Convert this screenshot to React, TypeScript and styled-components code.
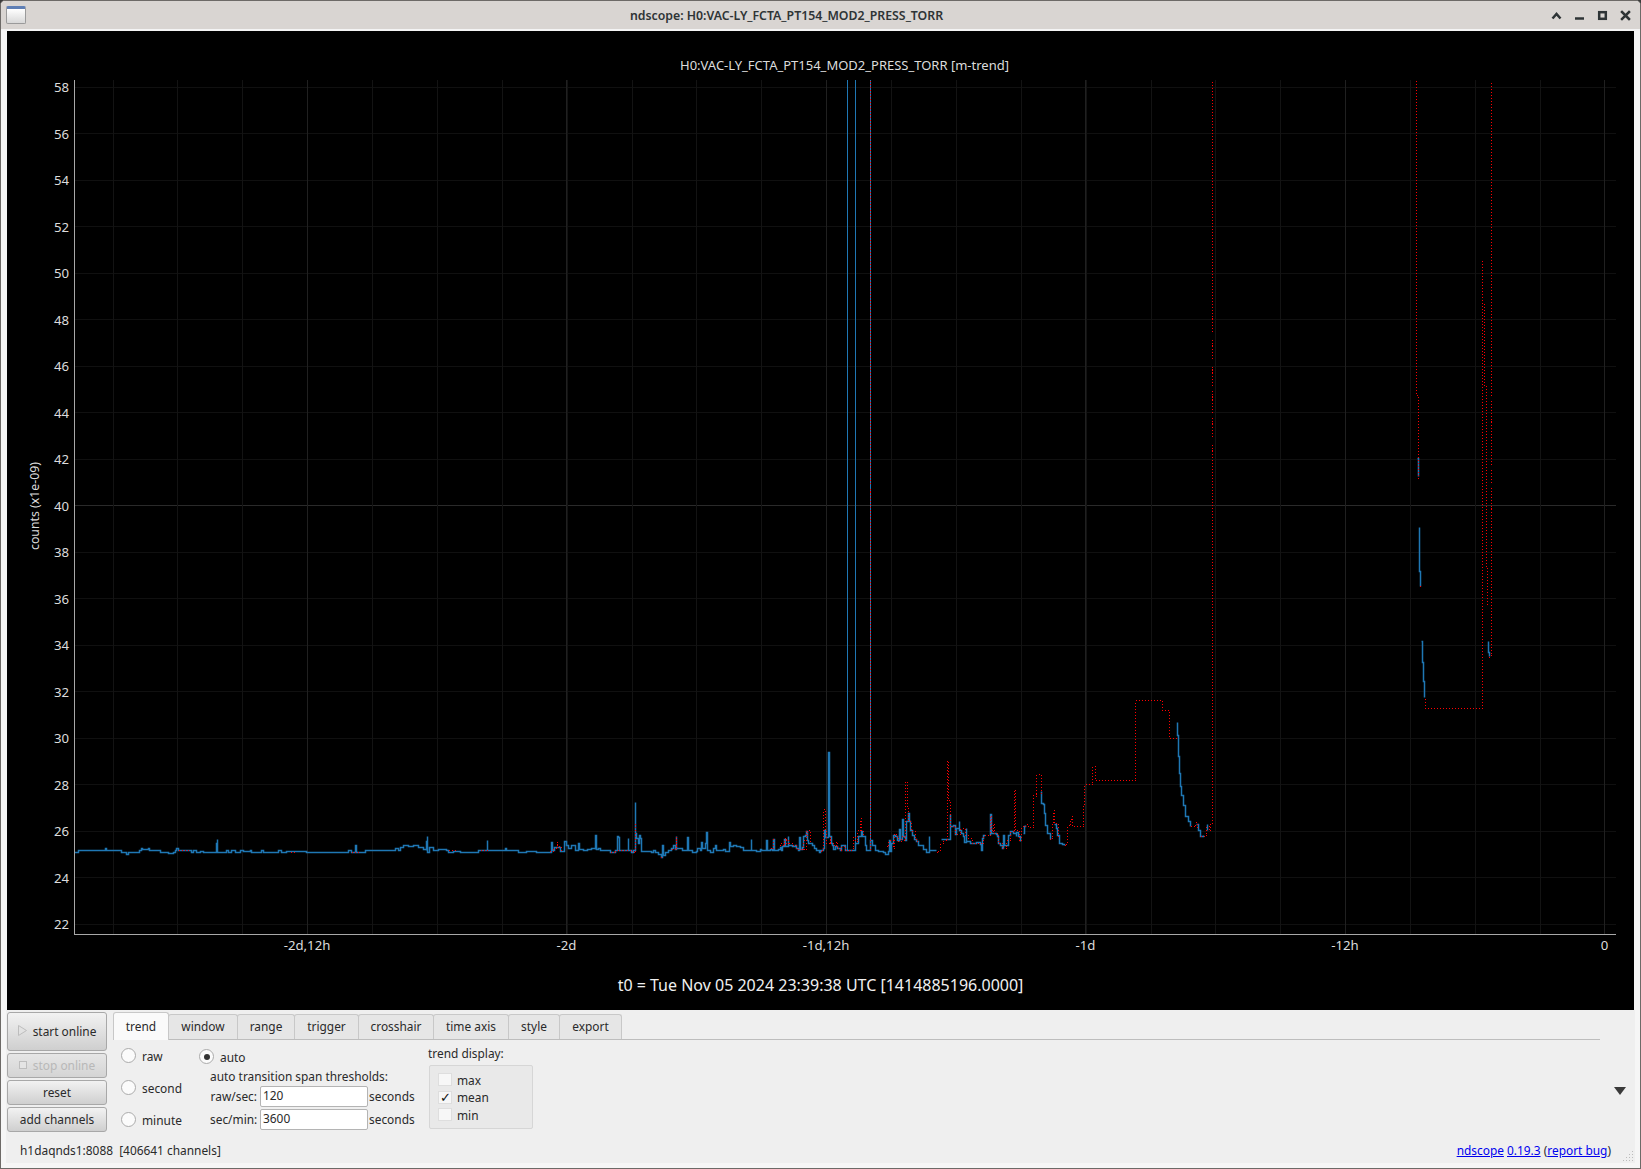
import React from 'react';
import styled, { createGlobalStyle } from 'styled-components';

const GlobalStyle = createGlobalStyle`
  html, body {
    margin: 0;
    padding: 0;
    background: #3a3a3a;
  }
`;

const Window = styled.div`
  width: 1641px;
  height: 1169px;
  box-sizing: border-box;
  display: flex;
  flex-direction: column;
  overflow: hidden;
  background: #f6f6f6;
  border: 1px solid #6d6a67;
  border-radius: 5px 5px 0 0;
  font-family: 'Noto Sans', 'Open Sans', sans-serif;
  font-size: 11.9px;
  color: #2a2a2a;
`;

const TitleBar = styled.div`
  position: relative;
  flex: 0 0 30px;
  box-sizing: border-box;
  display: flex;
  align-items: center;
  justify-content: space-between;
  padding: 0 6px 0 5px;
  background: #d9d5d2;
  border-bottom: 2px solid #f4f4f4;
`;

const TitleText = styled.div`
  position: absolute;
  left: 0;
  right: 68px;
  top: 6px;
  text-align: center;
  font-weight: 600;
  font-size: 12.3px;
  color: #2e3436;
`;

const WindowIcon = styled.div`
  width: 20px;
  height: 18px;
  box-sizing: border-box;
  border: 1px solid #9a9a9a;
  border-top: 3px solid #5f7fb5;
  border-radius: 2px;
  background: linear-gradient(#ffffff, #d8d8d8);
`;

const WindowButtons = styled.div`
  display: flex;
  align-items: center;
  gap: 6px;
  z-index: 1;
`;

const WindowButton = styled.svg`
  width: 17px;
  height: 17px;
  stroke: #2e3436;
  stroke-width: 2.5;
  fill: none;
`;

const PlotArea = styled.div`
  flex: 0 0 979px;
  margin: 0 6px;
  background: #000;
  line-height: 0;
`;

const Controls = styled.div`
  flex: 1;
  display: flex;
  gap: 6px;
  margin: 0 5px 5px;
  padding: 2px 0 0 1px;
  position: relative;
  background: #efefef;
`;

const ButtonColumn = styled.div`
  flex: 0 0 100px;
  display: flex;
  flex-direction: column;
  gap: 2px;
`;

const PushButton = styled.button<{ $h: number; $disabled?: boolean }>`
  height: ${({ $h }) => $h}px;
  width: 100%;
  padding: 0 0 2px;
  display: flex;
  align-items: center;
  justify-content: center;
  gap: 6px;
  border: 1px solid #a8a8a8;
  border-radius: 3px;
  background: ${({ $disabled }) =>
    $disabled ? 'linear-gradient(#e6e6e6, #d4d4d4)' : 'linear-gradient(#f2f2f2, #cfcfcf)'};
  font: inherit;
  color: ${({ $disabled }) => ($disabled ? '#b8b8b8' : '#2a2a2a')};
`;

const Main = styled.div`
  flex: 1;
  display: flex;
  flex-direction: column;
  min-width: 0;
  padding-right: 35px;
`;

const TabBar = styled.div`
  display: flex;
  height: 28px;
  box-sizing: border-box;
  padding-top: 2px;
  border-bottom: 1px solid #bdbdbd;
`;

const Tab = styled.div<{ $active?: boolean; $w: number }>`
  width: ${({ $w }) => $w}px;
  box-sizing: border-box;
  height: ${({ $active }) => ($active ? '28px' : '25px')};
  margin-top: ${({ $active }) => ($active ? '-2px' : '0')};
  display: flex;
  align-items: center;
  justify-content: center;
  background: ${({ $active }) => ($active ? '#fafafa' : '#e6e6e6')};
  border: 1px solid #c8c8c8;
  border-bottom: none;
  margin-right: -1px;
  border-radius: 3px 3px 0 0;
  position: relative;
  z-index: ${({ $active }) => ($active ? 1 : 0)};
  padding-bottom: 2px;
`;

const TabPage = styled.div`
  display: flex;
  height: 100px;
  padding-left: 8px;
`;

const RadioColumn = styled.div`
  width: 78px;
  display: flex;
  flex-direction: column;
  gap: 15px;
  padding-top: 7px;
`;

const RadioRow = styled.label`
  display: flex;
  align-items: center;
  gap: 6px;
  height: 17px;
`;

const RadioDot = styled.span<{ $on?: boolean }>`
  width: 13px;
  height: 13px;
  border-radius: 50%;
  background: #fbfbfb;
  border: 1px solid #ababab;
  display: flex;
  align-items: center;
  justify-content: center;
  &::after {
    content: '';
    width: 6px;
    height: 6px;
    border-radius: 50%;
    background: ${({ $on }) => ($on ? '#333' : 'transparent')};
  }
`;

const AutoColumn = styled.div`
  width: 229px;
  display: flex;
  flex-direction: column;
  padding-top: 8px;
`;

const AutoLabel = styled.div`
  margin: 3px 0 0 11px;
  height: 17px;
  line-height: 17px;
  white-space: nowrap;
`;

const SpanRow = styled.div`
  display: flex;
  align-items: center;
  height: 23px;
  padding-left: 11px;
  margin-top: -1px;
  margin-bottom: 1px;
`;

const SpanLabel = styled.span`
  width: 50px;
  text-align: right;
  padding-right: 3px;
  box-sizing: border-box;
  white-space: nowrap;
`;

const SpanInput = styled.div`
  width: 108px;
  height: 21px;
  margin-right: 1px;
  margin-top: 1px;
  box-sizing: border-box;
  line-height: 17px;
  padding-left: 2px;
  background: #fff;
  border: 1px solid #b4b4b4;
  border-radius: 2px;
`;

const DisplayColumn = styled.div`
  display: flex;
  flex-direction: column;
  padding-top: 5px;
`;

const DisplayBox = styled.div`
  margin: 4px 0 0 1px;
  width: 104px;
  height: 64px;
  box-sizing: border-box;
  padding: 5px 0 0 8px;
  background: #e9e9e9;
  border: 1px solid #d6d6d6;
  border-radius: 2px;
  display: flex;
  flex-direction: column;
  gap: 0.5px;
`;

const CheckRow = styled.div`
  display: flex;
  align-items: center;
  gap: 5px;
  height: 17px;
`;

const CheckBox = styled.span`
  width: 12px;
  height: 11px;
  background: #f7f7f7;
  border: 1px solid #dedede;
  display: flex;
  align-items: center;
  justify-content: center;
  font-size: 13px;
  line-height: 11px;
  color: #111;
`;

const StatusRow = styled.div`
  display: flex;
  justify-content: space-between;
  margin-left: -106px;
  margin-right: -11px;
  padding: 0 0 0 13px;
  height: 20px;
  line-height: 20px;
`;

const ChannelInfo = styled.span`
  white-space: pre;
`;

const LinkText = styled.a`
  color: #0000ee;
  text-decoration: underline;
`;

const CollapseArrow = styled.svg`
  position: absolute;
  right: 9px;
  top: 77px;
  width: 12px;
  height: 8px;
  fill: #3a3a3a;
`;

const ResizeGrip = styled.svg`
  position: absolute;
  right: 1px;
  bottom: 1px;
  width: 11px;
  height: 11px;
  fill: #bcbcbc;
`;

// traced from the plot, in 3x crop coordinates, then mapped back to page pixels
type Pts = number[][];
const crop = (ox: number, oy: number, pts: Pts): Pts =>
  pts.map(([x, y]) => [ox + x / 3, oy + y / 3]);

const snap = (v: number) => Math.floor(v) + 0.5;

const stepPath = (pts: Pts) =>
  pts.map(([x, y], i) => (i === 0 ? `M${snap(x)} ${snap(y)}` : `H${snap(x)}V${snap(y)}`)).join('');

const flat = crop(60, 800, [
  [44, 157], [52, 157], [55, 151], [130, 151], [135, 146], [140, 151], [180, 151], [183, 157], [195, 157],
  [200, 162], [205, 157], [232, 157], [238, 151], [243, 146], [248, 149], [262, 149], [265, 146], [268, 151],
  [295, 151], [300, 157], [315, 158], [325, 160], [340, 157], [345, 151], [350, 146], [356, 151], [390, 151],
  [395, 157], [400, 151], [408, 157], [420, 155], [430, 157], [468, 157], [468, 130], [470, 130], [472, 118],
  [473, 157], [495, 157], [500, 151], [505, 157], [515, 151], [525, 157], [540, 151], [550, 155], [570, 151],
  [575, 157], [590, 157], [605, 151], [610, 157], [650, 157], [655, 151], [665, 157], [680, 155], [740, 157],
  [805, 157], [815, 158], [825, 157], [850, 157], [865, 151], [875, 157], [885, 157], [885, 135], [888, 135],
  [890, 157], [905, 157], [915, 151], [1000, 151], [1005, 145], [1015, 151], [1020, 142], [1030, 136],
  [1045, 138], [1060, 136], [1075, 143], [1090, 148], [1098, 151], [1099, 125], [1102, 108], [1103, 157],
  [1108, 143], [1120, 151], [1135, 148], [1160, 151], [1165, 157], [1180, 153], [1200, 157], [1250, 157],
  [1255, 151], [1281, 151], [1282, 120], [1283, 151], [1330, 151], [1335, 145], [1340, 151], [1370, 151],
  [1375, 157], [1400, 155], [1430, 157], [1470, 157], [1474, 127], [1476, 150], [1484, 143], [1500, 148],
]);

const ripple = crop(500, 780, [
  [180, 215], [192, 215], [192, 183], [197, 183], [200, 197], [205, 205], [215, 197], [225, 210], [235, 190],
  [237, 207], [250, 212], [262, 208], [275, 205], [285, 208], [286, 165], [288, 208], [295, 205], [300, 212],
  [325, 212], [330, 217], [345, 212], [351, 212], [352, 170], [356, 172], [357, 212], [384, 212], [385, 175],
  [386, 212], [395, 217], [400, 210], [406, 205], [406, 66], [407, 160], [410, 175], [415, 190], [418, 165],
  [421, 175], [423, 215], [455, 217], [460, 212], [465, 217], [475, 222], [484, 232], [487, 195], [490, 225],
  [497, 218], [505, 212], [515, 205], [520, 195], [525, 208], [529, 170], [530, 205], [540, 205], [548, 212],
  [562, 212], [562, 172], [564, 212], [578, 217], [590, 215], [592, 205], [600, 210], [605, 187], [607, 205],
  [617, 190], [619, 157], [621, 210], [630, 217], [640, 205], [645, 197], [650, 210], [665, 212], [670, 208],
  [675, 215], [688, 210], [688, 187], [692, 200], [700, 197], [710, 200], [720, 202], [730, 212], [752, 212],
  [754, 177], [755, 212], [770, 215], [782, 207], [785, 212], [799, 205], [799, 180], [801, 212], [810, 208],
  [818, 212], [820, 178], [823, 210], [835, 208],
]);

const bursts = crop(780, 680, [
  [0, 503], [3, 510], [8, 510], [8, 500], [13, 500], [13, 478], [15, 498], [24, 496], [25, 468], [26, 495],
  [36, 498], [46, 497], [48, 505], [55, 510], [58, 510], [59, 472], [60, 508], [68, 503], [70, 470], [72, 468],
  [75, 465], [80, 455], [82, 480], [85, 490], [92, 490], [97, 497], [102, 505], [108, 512], [118, 518], [122, 512],
  [130, 505], [134, 450], [137, 472], [144, 472], [145, 217], [147, 258], [149, 470], [153, 490], [158, 497],
  [160, 507], [165, 500], [172, 505], [180, 510], [185, 497], [192, 497], [197, 510], [226, 510], [226, 490],
  [235, 470], [243, 455], [248, 470], [255, 495], [260, 512], [270, 512], [272, 480], [278, 495], [285, 510],
  [295, 515], [310, 518], [315, 523], [325, 515], [328, 482], [330, 515], [335, 490], [340, 465], [345, 470],
  [352, 480], [358, 483], [358, 448], [361, 478], [367, 470], [367, 418], [370, 470], [375, 480], [378, 425],
  [385, 400], [387, 425], [392, 452], [397, 465], [402, 478], [410, 485], [415, 495], [425, 497], [430, 507],
  [440, 517], [447, 511], [448, 468], [449, 511], [468, 511],
]);

const blueSegments: Pts[] = [
  [...flat, ...ripple, ...bursts],
  crop(780, 680, [
    [485, 478], [495, 478], [511, 478], [511, 403], [512, 440], [520, 437], [525, 445], [527, 462], [530, 445],
    [537, 425], [539, 450], [545, 460], [550, 470], [553, 487], [557, 487], [559, 445], [560, 485], [572, 490],
    [585, 490], [590, 487], [600, 492], [605, 512], [607, 475], [610, 467], [615, 467],
  ]),
  crop(780, 680, [
    [630, 465], [631, 403], [633, 460], [648, 463], [652, 470], [656, 490], [662, 497], [668, 505], [670, 465],
    [672, 495], [680, 495], [684, 465], [690, 455], [700, 460], [708, 468], [710, 458], [714, 470], [720, 485],
  ]),
  crop(780, 680, [[730, 460], [732, 440], [736, 437]]),
  crop(780, 680, [
    [784, 335], [785, 370], [790, 372], [792, 400], [797, 435], [803, 460], [810, 477],
  ]),
  crop(780, 680, [[823, 433], [828, 445], [833, 465], [838, 490], [848, 492], [852, 497]]),
  crop(780, 680, [
    [1192, 127], [1192, 165], [1196, 165], [1196, 230], [1199, 280], [1202, 318], [1205, 345], [1210, 375],
    [1217, 408], [1224, 425], [1230, 440],
  ]),
  crop(780, 680, [[1250, 432], [1256, 452], [1262, 470], [1270, 465]]),
  crop(780, 680, [[1282, 433], [1282, 452]]),
  // right-hand fragments
  crop(1380, 380, [[112, 235], [115, 238], [115, 290]]),
  crop(1380, 380, [[118, 441], [118, 573], [121, 573], [121, 618]]),
  crop(1380, 380, [[124, 784], [127, 786], [127, 848], [130, 850], [130, 905], [133, 905], [133, 952]]),
  crop(1380, 380, [[325, 783], [325, 818], [328, 820], [328, 828]]),
];

// the three full-height spikes, a single pixel wide
const spikeX = [847, 855, 870];

const redSegments: Pts[] = [
  crop(780, 680, [
    [0, 490], [12, 490], [14, 475], [18, 490], [40, 497], [50, 507], [68, 507], [70, 480], [80, 450], [83, 470],
  ]),
  crop(780, 680, [
    [120, 515], [128, 505], [131, 505], [131, 388], [135, 388], [135, 450], [140, 490], [150, 470], [152, 490],
    [160, 497], [168, 485], [172, 505], [180, 510], [183, 500], [190, 500], [197, 510], [215, 505], [220, 470],
    [225, 485], [232, 450], [240, 415], [243, 450], [250, 470],
  ]),
  crop(780, 680, [
    [320, 500], [325, 480], [340, 505], [342, 460], [350, 470], [355, 485], [365, 470], [373, 480], [377, 305],
    [381, 305], [381, 380], [385, 425], [395, 455], [405, 478], [412, 490],
  ]),
  crop(780, 680, [
    [470, 517], [475, 510], [480, 490], [490, 480], [503, 470], [503, 240], [506, 240], [506, 360], [511, 370],
    [511, 440], [520, 440], [527, 462], [540, 445], [556, 465], [565, 475], [578, 490], [605, 490], [610, 467],
    [630, 465], [632, 405], [635, 450], [643, 430], [640, 460], [655, 490], [668, 505], [680, 480], [690, 455],
    [704, 455], [704, 328], [706, 328], [706, 450], [718, 480], [725, 440], [737, 432], [745, 443], [760, 443],
    [760, 343], [768, 350], [770, 282], [783, 282], [785, 345],
  ]),
  crop(780, 680, [
    [808, 477], [815, 475], [818, 430], [820, 390], [822, 430], [835, 470],
  ]),
  crop(780, 680, [
    [852, 495], [860, 490], [862, 435], [870, 420], [875, 410], [878, 440], [907, 440], [909, 375], [912, 314],
    [935, 314], [936, 260], [941, 260], [945, 300], [1065, 300], [1067, 60], [1146, 60], [1148, 90], [1167, 92],
    [1169, 175], [1192, 175],
  ]),
  crop(780, 680, [
    [1230, 440], [1240, 440], [1247, 428], [1252, 445],
  ]),
  crop(780, 680, [
    [1262, 470], [1275, 465], [1280, 440], [1287, 450], [1292, 430], [1295, 430],
  ]),
  [[1212, 823], [1212, 80]],
  [[870, 80], [870, 850]],
  // flat-section leftovers
  crop(60, 800, [[355, 151], [390, 151]]),
  crop(60, 800, [[690, 158], [702, 158]]),
  crop(60, 800, [[875, 158], [895, 158]]),
  crop(60, 800, [[1165, 152], [1185, 152]]),
  crop(60, 800, [[1260, 151], [1285, 151]]),
  crop(500, 780, [[148, 215], [160, 205], [172, 183], [172, 200], [185, 217]]),
  crop(500, 780, [[330, 217], [345, 210], [380, 212], [396, 217], [406, 200], [406, 130]]),
  crop(500, 780, [[480, 232], [484, 226]]),
  crop(500, 780, [[515, 208], [529, 168], [530, 205]]),
  crop(500, 780, [[810, 205], [820, 175]]),
  crop(500, 780, [[838, 195], [853, 178], [865, 195]]),
  crop(500, 780, [[900, 208], [920, 150], [930, 185]]),
  // right-hand verticals
  [[1416, 80], [1416, 395], [1418, 395], [1418, 478]],
  [[1420, 585], [1420, 587]],
  crop(1380, 380, [[136, 955], [136, 985], [307, 985]]),
  [[1482, 708], [1482, 258]],
  [[1484, 303], [1484, 385], [1486, 388], [1486, 568], [1487, 570], [1487, 605]],
  [[1491, 82], [1491, 655], [1489, 657]],
];

const yTick = (v: number) => 87.5 + (58 - v) * 23.24;
const yTicks = Array.from({ length: 19 }, (_, i) => 58 - i * 2);
const minorX = Array.from({ length: 23 }, (_, i) => 113 + i * 64.88);
const majorX = [
  { x: 307, label: '-2d,12h' },
  { x: 566.5, label: '-2d' },
  { x: 826, label: '-1d,12h' },
  { x: 1085.5, label: '-1d' },
  { x: 1345, label: '-12h' },
  { x: 1604.5, label: '0' },
];

const ScopePlot = () => (
  <svg width={1627} height={979} viewBox="7 31 1627 979" fontFamily="'Noto Sans', sans-serif">
    <g shapeRendering="crispEdges">
      {yTicks.map((v) => (
        <line
          key={v}
          x1={75}
          x2={1616}
          y1={snap(yTick(v))}
          y2={snap(yTick(v))}
          stroke={v === 40 ? '#2a2a2a' : '#101010'}
        />
      ))}
      {minorX.map((x) => (
        <line key={x} x1={snap(x)} x2={snap(x)} y1={80} y2={934} stroke="#131313" />
      ))}
      {majorX.map(({ x }) => (
        <line key={x} x1={snap(x)} x2={snap(x)} y1={80} y2={934} stroke="#202020" />
      ))}
      {spikeX.map((x) => (
        <line key={x} x1={x + 0.5} x2={x + 0.5} y1={80} y2={850} stroke="#1f77b4" />
      ))}
    </g>
    {blueSegments.map((pts, i) => (
      <path key={i} d={stepPath(pts)} fill="none" stroke="#1f77b4" strokeWidth={1.5} />
    ))}
    <g shapeRendering="crispEdges">
      {redSegments.map((pts, i) => (
        <path key={i} d={stepPath(pts)} fill="none" stroke="#ff0000" strokeWidth={1} strokeDasharray="1 2" />
      ))}
      <line x1={74.5} x2={74.5} y1={80} y2={934} stroke="#a8a8a8" />
      <line x1={74} x2={1616} y1={934.5} y2={934.5} stroke="#a8a8a8" />
    </g>
    <g fill="#dcdcdc" fontSize={13.2}>
      {yTicks.map((v) => (
        <text key={v} x={69} y={yTick(v) + (v === 58 ? 4 : 5)} textAnchor="end">
          {v}
        </text>
      ))}
      {majorX.map(({ x, label }) => (
        <text key={label} x={x} y={950} textAnchor="middle">
          {label}
        </text>
      ))}
      <text x={844.5} y={70} textAnchor="middle" fontSize={13}>
        H0:VAC-LY_FCTA_PT154_MOD2_PRESS_TORR [m-trend]
      </text>
      <text x={39} y={506} textAnchor="middle" fontSize={12.3} transform="rotate(-90 39 506)">
        counts (x1e-09)
      </text>
      <text x={820.5} y={991} textAnchor="middle" fontSize={16} fill="#f0f0f0">
        t0 = Tue Nov 05 2024 23:39:38 UTC [1414885196.0000]
      </text>
    </g>
  </svg>
);

const tabs = [
  { label: 'trend', w: 56 },
  { label: 'window', w: 70 },
  { label: 'range', w: 58 },
  { label: 'trigger', w: 65 },
  { label: 'crosshair', w: 76 },
  { label: 'time axis', w: 76 },
  { label: 'style', w: 52 },
  { label: 'export', w: 63 },
];

const App = () => (
  <>
    <GlobalStyle />
    <Window>
      <TitleBar>
        <WindowIcon />
        <TitleText>ndscope: H0:VAC-LY_FCTA_PT154_MOD2_PRESS_TORR</TitleText>
        <WindowButtons>
          <WindowButton viewBox="0 0 17 17">
            <path d="M4.5 11.5 L8.5 7 L12.5 11.5" />
          </WindowButton>
          <WindowButton viewBox="0 0 17 17">
            <path d="M4 11.5 H13" />
          </WindowButton>
          <WindowButton viewBox="0 0 17 17">
            <rect x="5.2" y="5.2" width="6.6" height="6.6" />
          </WindowButton>
          <WindowButton viewBox="0 0 17 17">
            <path d="M5 5 L12 12 M12 5 L5 12" strokeLinecap="square" />
          </WindowButton>
        </WindowButtons>
      </TitleBar>
      <PlotArea>
        <ScopePlot />
      </PlotArea>
      <Controls>
        <ButtonColumn>
          <PushButton $h={39}>
            <svg width="9" height="11" viewBox="0 0 9 11" fill="#e2e2e2" stroke="#bdbdbd">
              <path d="M0.5 0.5 L8.5 5.5 L0.5 10.5 Z" />
            </svg>
            start online
          </PushButton>
          <PushButton $h={25} $disabled>
            <svg width="8" height="8" viewBox="0 0 8 8" fill="#e4e4e4" stroke="#bdbdbd">
              <rect x="0.5" y="0.5" width="7" height="7" />
            </svg>
            stop online
          </PushButton>
          <PushButton $h={25}>reset</PushButton>
          <PushButton $h={25}>add channels</PushButton>
        </ButtonColumn>
        <Main>
          <TabBar>
            {tabs.map(({ label, w }, i) => (
              <Tab key={label} $w={w} $active={i === 0}>
                {label}
              </Tab>
            ))}
          </TabBar>
          <TabPage>
            <RadioColumn>
              <RadioRow>
                <RadioDot />
                raw
              </RadioRow>
              <RadioRow>
                <RadioDot />
                second
              </RadioRow>
              <RadioRow>
                <RadioDot />
                minute
              </RadioRow>
            </RadioColumn>
            <AutoColumn>
              <RadioRow>
                <RadioDot $on />
                auto
              </RadioRow>
              <AutoLabel>auto transition span thresholds:</AutoLabel>
              <SpanRow>
                <SpanLabel>raw/sec:</SpanLabel>
                <SpanInput>120</SpanInput>
                seconds
              </SpanRow>
              <SpanRow>
                <SpanLabel>sec/min:</SpanLabel>
                <SpanInput>3600</SpanInput>
                seconds
              </SpanRow>
            </AutoColumn>
            <DisplayColumn>
              trend display:
              <DisplayBox>
                <CheckRow>
                  <CheckBox />
                  max
                </CheckRow>
                <CheckRow>
                  <CheckBox>✓</CheckBox>
                  mean
                </CheckRow>
                <CheckRow>
                  <CheckBox />
                  min
                </CheckRow>
              </DisplayBox>
            </DisplayColumn>
          </TabPage>
          <StatusRow>
            <ChannelInfo>h1daqnds1:8088  [406641 channels]</ChannelInfo>
            <span>
              <LinkText>ndscope</LinkText> <LinkText>0.19.3</LinkText> (<LinkText>report bug</LinkText>)
            </span>
          </StatusRow>
        </Main>
        <CollapseArrow viewBox="0 0 12 8">
          <path d="M0 0 H12 L6 8 Z" />
        </CollapseArrow>
        <ResizeGrip viewBox="0 0 11 11">
          <rect x="9" y="0" width="1" height="1" />
          <rect x="6" y="3" width="1" height="1" />
          <rect x="9" y="3" width="1" height="1" />
          <rect x="3" y="6" width="1" height="1" />
          <rect x="6" y="6" width="1" height="1" />
          <rect x="9" y="6" width="1" height="1" />
          <rect x="0" y="9" width="1" height="1" />
          <rect x="3" y="9" width="1" height="1" />
          <rect x="6" y="9" width="1" height="1" />
          <rect x="9" y="9" width="1" height="1" />
        </ResizeGrip>
      </Controls>
    </Window>
  </>
);

export default App;
